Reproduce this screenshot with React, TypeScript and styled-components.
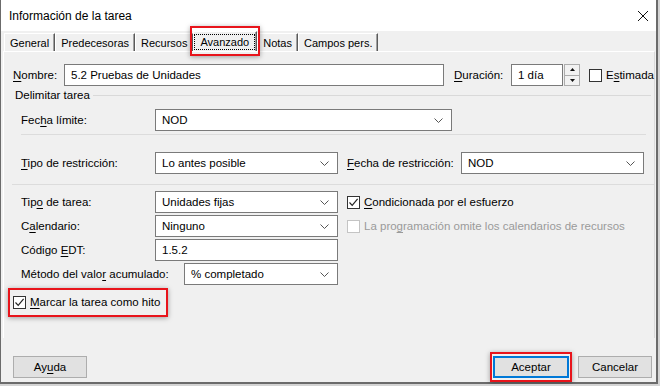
import React from "react";
import styled, { createGlobalStyle } from "styled-components";

const GlobalStyle = createGlobalStyle`
  *, *::before, *::after { box-sizing: border-box; }
  html, body { margin: 0; padding: 0; background: #d4d4d4; }
  body {
    font-family: "Liberation Sans", Arial, sans-serif;
    font-size: 11.5px;
    color: #000;
  }
  u { text-underline-offset: 2px; }
`;

const Dialog = styled.div`
  width: 658px;
  height: 384px;
  background: #f0f0f0;
  border-left: 1px solid #6b6b6b;
  border-right: 2px solid #6b6b6b;
  border-bottom: 2px solid #6b6b6b;
  display: flex;
  flex-direction: column;
`;

const TitleBar = styled.div`
  height: 31px;
  flex: none;
  background: #fff;
  display: flex;
  align-items: center;
  justify-content: space-between;
  padding: 0 7px 0 8px;
  font-size: 12px;
`;

const TabStrip = styled.div`
  height: 20px;
  flex: none;
  display: flex;
  align-items: flex-end;
  padding-left: 3px;
  font-size: 11px;
`;

const Tab = styled.div<{ $active?: boolean }>`
  height: ${(p) => (p.$active ? 20 : 18)}px;
  padding: ${(p) => (p.$active ? "0 1px 0 0" : "0 5px 0 5px")};
  display: flex;
  align-items: center;
  background: #f0f0f0;
  border-top: 1px solid #fff;
  border-left: 1px solid #fff;
  border-right: 1px solid #5a5a5a;
  box-shadow: inset -1px 0 #a0a0a0;
  white-space: nowrap;
  position: relative;
  z-index: ${(p) => (p.$active ? 1 : 0)};
`;

const FocusLabel = styled.span`
  border: 1px dotted #000;
  padding: 1px 5px 1px 5px;
`;

const Highlight = styled.div<{ $px: number; $py: number }>`
  border: 2px solid #e8141b;
  padding: ${(p) => `${p.$py}px ${p.$px}px`};
  margin: ${(p) => `-${p.$py + 2}px -${p.$px + 2}px`};
  box-shadow: 0 1px 5px rgba(0, 0, 0, 0.35);
  position: relative;
  z-index: 2;
  display: flex;
  align-items: center;
`;

const Panel = styled.div`
  flex: 1;
  margin: 0 1px 0 2px;
  border-top: 1px solid #fff;
  border-left: 1px solid #fff;
  border-right: 1px solid #dadada;
  display: flex;
  flex-direction: column;
`;

const Row = styled.div<{ $top: number; $left: number }>`
  display: flex;
  align-items: center;
  height: 22px;
  flex: none;
  margin-top: ${(p) => p.$top}px;
  padding-left: ${(p) => p.$left}px;
`;

const Label = styled.div<{ $w: number }>`
  width: ${(p) => p.$w}px;
  flex: none;
  white-space: nowrap;
`;

const Field = styled.div<{ $w: number }>`
  width: ${(p) => p.$w}px;
  height: 22px;
  flex: none;
  border: 1px solid #7a7a7a;
  background: #fff;
  display: flex;
  align-items: center;
  justify-content: space-between;
  padding: 0 8px 0 6px;
  white-space: nowrap;
`;

const Spin = styled.div`
  width: 16px;
  height: 22px;
  margin-left: 1px;
  display: flex;
  flex-direction: column;
`;

const SpinButton = styled.div`
  flex: 1;
  border: 1px solid #adadad;
  background: #f2f2f2;
  display: flex;
  align-items: center;
  justify-content: center;
  & + & { border-top: none; }
`;

const CheckBox = styled.span<{ $disabled?: boolean }>`
  width: 13px;
  height: 13px;
  flex: none;
  border: 1px solid ${(p) => (p.$disabled ? "#c4c4c4" : "#333")};
  background: #fff;
  display: flex;
  align-items: center;
  justify-content: center;
`;

const Check = styled.label<{ $gap: number; $disabled?: boolean }>`
  display: flex;
  align-items: center;
  margin-left: ${(p) => p.$gap}px;
  color: ${(p) => (p.$disabled ? "#9a9a9a" : "#000")};
  white-space: nowrap;
  span + span { margin-left: 4px; }
`;

const GroupHead = styled.div`
  display: flex;
  align-items: center;
  height: 14px;
  margin-top: 2px;
  padding-left: 11px;
  padding-right: 3px;
  gap: 3px;
  &::after {
    content: "";
    flex: 1;
    border-top: 1px solid #d9d9d9;
  }
`;

const Separator = styled.div<{ $top: number; $left: number; $right: number }>`
  height: 1px;
  flex: none;
  background: #dcdcdc;
  margin: ${(p) => `${p.$top}px ${p.$right}px 0 ${p.$left}px`};
`;

const Footer = styled.div`
  height: 44px;
  flex: none;
  display: flex;
  align-items: flex-end;
  padding: 0 4px 4px 12px;
`;

const Button = styled.button<{ $w: number; $default?: boolean }>`
  width: ${(p) => p.$w}px;
  height: 22px;
  background: #e1e1e1;
  border: ${(p) => (p.$default ? "2px solid #0078d7" : "1px solid #adadad")};
  font: inherit;
  color: #000;
  padding: 0;
`;

const Spacer = styled.div`
  flex: 1;
`;

const Chevron = () => (
  <svg width="9" height="5" viewBox="0 0 9 5">
    <polyline points="0.5,0.5 4.5,4.5 8.5,0.5" fill="none" stroke="#555" strokeWidth="1" />
  </svg>
);

const Select = ({ w, value }: { w: number; value: string }) => (
  <Field $w={w}>
    <span>{value}</span>
    <Chevron />
  </Field>
);

const Tick = () => (
  <svg width="11" height="11" viewBox="0 0 11 11">
    <polyline points="1.5,5.5 4.2,8.3 9.6,1.8" fill="none" stroke="#222" strokeWidth="1.2" />
  </svg>
);

const tabs = ["General", "Predecesoras", "Recursos", "Avanzado", "Notas", "Campos pers."];

export default function App() {
  return (
    <>
      <GlobalStyle />
      <Dialog>
        <TitleBar>
          <span>Información de la tarea</span>
          <svg width="12" height="12" viewBox="0 0 12 12">
            <path d="M1 1 L11 11 M11 1 L1 11" stroke="#111" strokeWidth="1" />
          </svg>
        </TitleBar>

        <TabStrip>
          {tabs.map((t) =>
            t === "Avanzado" ? (
              <Highlight key={t} $px={1} $py={3}>
                <Tab $active>
                  <FocusLabel>{t}</FocusLabel>
                </Tab>
              </Highlight>
            ) : (
              <Tab key={t}>{t}</Tab>
            )
          )}
        </TabStrip>

        <Panel>
          <Row $top={12} $left={9}>
            <Label $w={51}>
              <u>N</u>ombre:
            </Label>
            <Field $w={380}>5.2 Pruebas de Unidades</Field>
            <Label $w={57} style={{ marginLeft: 10 }}>
              <u>D</u>uración:
            </Label>
            <Field $w={52}>1 día</Field>
            <Spin>
              <SpinButton>
                <svg width="5" height="3" viewBox="0 0 5 3">
                  <polygon points="0,3 2.5,0 5,3" fill="#111" />
                </svg>
              </SpinButton>
              <SpinButton>
                <svg width="5" height="3" viewBox="0 0 5 3">
                  <polygon points="0,0 2.5,3 5,0" fill="#111" />
                </svg>
              </SpinButton>
            </Spin>
            <Check $gap={9}>
              <CheckBox />
              <span>
                E<u>s</u>timada
              </span>
            </Check>
          </Row>

          <GroupHead>Delimitar tarea</GroupHead>

          <Row $top={7} $left={17}>
            <Label $w={134}>
              Fec<u>h</u>a límite:
            </Label>
            <Select w={297} value="NOD" />
          </Row>

          <Separator $top={3} $left={17} $right={8} />

          <Row $top={17} $left={17}>
            <Label $w={134}>
              <u>T</u>ipo de restricción:
            </Label>
            <Select w={183} value="Lo antes posible" />
            <Label $w={114} style={{ marginLeft: 9 }}>
              <u>F</u>echa de restricción:
            </Label>
            <Select w={183} value="NOD" />
          </Row>

          <Separator $top={10} $left={8} $right={0} />

          <Row $top={6} $left={17}>
            <Label $w={134}>
              Tip<u>o</u> de tarea:
            </Label>
            <Select w={183} value="Unidades fijas" />
            <Check $gap={9}>
              <CheckBox>
                <Tick />
              </CheckBox>
              <span>
                <u>C</u>ondicionada por el esfuerzo
              </span>
            </Check>
          </Row>

          <Row $top={2} $left={17}>
            <Label $w={134}>
              C<u>a</u>lendario:
            </Label>
            <Select w={183} value="Ninguno" />
            <Check $gap={9} $disabled>
              <CheckBox $disabled />
              <span>
                La pro<u>g</u>ramación omite los calendarios de recursos
              </span>
            </Check>
          </Row>

          <Row $top={2} $left={17}>
            <Label $w={134}>
              Código <u>E</u>DT:
            </Label>
            <Field $w={183}>1.5.2</Field>
          </Row>

          <Row $top={2} $left={17}>
            <Label $w={163}>
              Método del valo<u>r</u> acumulado:
            </Label>
            <Select w={154} value="% completado" />
          </Row>

          <Row $top={6} $left={9}>
            <Highlight $px={3} $py={6}>
              <Check $gap={0}>
                <CheckBox>
                  <Tick />
                </CheckBox>
                <span>
                  <u>M</u>arcar la tarea como hito
                </span>
              </Check>
              <Spacer style={{ width: 3 }} />
            </Highlight>
          </Row>
        </Panel>

        <Footer>
          <Button $w={74}>
            Ay<u>u</u>da
          </Button>
          <Spacer />
          <Highlight $px={1} $py={2}>
            <Button $w={76} $default>
              Aceptar
            </Button>
          </Highlight>
          <Button $w={74} style={{ marginLeft: 9 }}>
            Cancelar
          </Button>
        </Footer>
      </Dialog>
    </>
  );
}
